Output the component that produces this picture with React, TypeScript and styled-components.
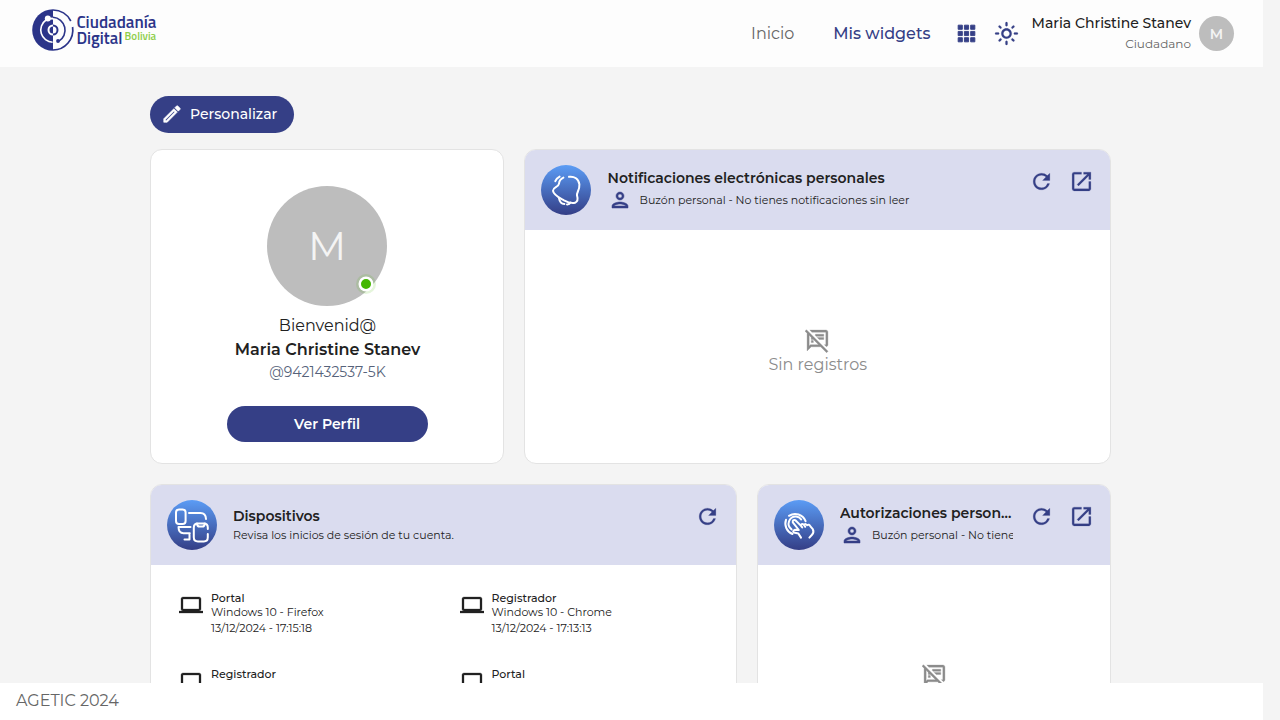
import React, { ReactNode } from "react";
import styled, { createGlobalStyle } from "styled-components";
import {
  MdApps,
  MdOutlineLightMode,
  MdOutlineEdit,
  MdOutlinePerson,
  MdRefresh,
  MdLaunch,
  MdOutlineSpeakerNotesOff,
  MdLaptop,
} from "react-icons/md";

const navy = "#353f86";
const logoNavy = "#2b3489";
const family = `Montserrat, Inter, "Liberation Sans", sans-serif`;

const GlobalStyle = createGlobalStyle`
  * { box-sizing: border-box; }
  body { margin: 0; background: #f4f4f4; font-family: ${family}; overflow: hidden; }
  button { font: inherit; border: 0; padding: 0; background: none; cursor: pointer; }
  svg { display: block; flex: none; }
  svg[stroke-width="0"] path[fill="none"] { stroke: none; }
`;

const Text = styled.span<{ $size: number; $line: number; $weight?: number; $color?: string }>`
  display: block;
  white-space: nowrap;
  font-size: ${(p) => p.$size}px;
  line-height: ${(p) => p.$line}px;
  font-weight: ${(p) => p.$weight ?? 400};
  color: ${(p) => p.$color ?? "#212121"};
`;

const Shell = styled.div`
  width: 1263px;
  height: 720px;
  display: flex;
  flex-direction: column;
`;

const Header = styled.header`
  flex: 0 0 67px;
  display: flex;
  align-items: center;
  justify-content: space-between;
  padding: 0 29px 0 30px;
  background: #fdfdfd;
`;

const Logo = styled.svg`
  margin-bottom: 7px;
`;

const Nav = styled.nav`
  display: flex;
  align-items: center;
  color: ${navy};
`;

const NavLink = styled.a<{ $active?: boolean }>`
  font-size: 16px;
  line-height: 24px;
  font-weight: ${(p) => (p.$active ? 500 : 400)};
  color: ${(p) => (p.$active ? navy : "#666")};
  margin-right: ${(p) => (p.$active ? 23 : 39)}px;
`;

const IconButton = styled.button<{ $bold?: number }>`
  display: flex;
  color: ${navy};
  svg {
    stroke-width: ${(p) => p.$bold ?? 0.2}px;
  }
`;

const NavIcons = styled.div`
  display: flex;
  gap: 15px;
  margin-right: 13px;
  padding-bottom: 1px;
`;

const UserBlock = styled.div`
  display: flex;
  flex-direction: column;
  align-items: flex-end;
  margin-right: 8px;
`;

const Avatar = styled.div<{ $size: number }>`
  position: relative;
  display: flex;
  align-items: center;
  justify-content: center;
  width: ${(p) => p.$size}px;
  height: ${(p) => p.$size}px;
  border-radius: 50%;
  background: #bdbdbd;
`;

const StatusDot = styled.i`
  position: absolute;
  right: 14px;
  bottom: 15px;
  width: 14px;
  height: 14px;
  border-radius: 50%;
  background: #44b700;
  border: 2px solid #fff;
  box-shadow: 0 0 0 0.5px #fff, 0 0 0 3px rgba(68, 183, 0, 0.14);
`;

const Main = styled.main`
  flex: 1;
  min-height: 0;
  overflow: hidden;
  padding: 29px 152px 0 150px;
`;

const PillButton = styled.button<{ $width: number; $height: number; $icon?: boolean }>`
  display: flex;
  align-items: center;
  justify-content: ${(p) => (p.$icon ? "flex-start" : "center")};
  gap: 7px;
  width: ${(p) => p.$width}px;
  height: ${(p) => p.$height}px;
  padding: ${(p) => (p.$icon ? "0 0 1px 11px" : "0")};
  border-radius: 20px;
  background: ${navy};
  color: #fff;
  svg {
    stroke-width: 0.7px;
  }
`;

const Grid = styled.div`
  display: flex;
  flex-wrap: wrap;
  gap: 20px;
  margin-top: 16px;
`;

const Card = styled.section<{ $wide?: boolean }>`
  width: ${(p) => (p.$wide ? 587 : 354)}px;
  height: 315px;
  border: 1px solid #e3e3e3;
  border-radius: 12px;
  background: #fff;
  overflow: hidden;
`;

const ProfileBody = styled.div`
  display: flex;
  flex-direction: column;
  align-items: center;
  padding-top: 36px;
`;

const ProfileText = styled.div`
  display: flex;
  flex-direction: column;
  align-items: center;
  padding: 8px 0 23px 1px;
`;

const CardHeader = styled.div`
  display: flex;
  height: 80px;
  padding: 15px 16px 0;
  background: #dadcef;
`;

const Titles = styled.div<{ $top: number; $left: number }>`
  flex: 1;
  min-width: 0;
  overflow: hidden;
  margin-left: ${(p) => p.$left}px;
  padding-top: ${(p) => p.$top}px;
`;

const Title = styled.h2`
  margin: 0;
  font-size: 14px;
  line-height: 20px;
  font-weight: 600;
  color: #212121;
  white-space: nowrap;
  overflow: hidden;
  text-overflow: ellipsis;
`;

const SubLine = styled.div`
  display: flex;
  align-items: center;
  gap: 8px;
  height: 24px;
  overflow: hidden;
  color: ${navy};
  svg {
    stroke-width: 0.5px;
  }
`;

const Actions = styled.div`
  display: flex;
  gap: 15px;
  margin: 0 0 0 16px;
  padding-top: 4px;
`;

const EmptyState = styled.div`
  display: flex;
  flex-direction: column;
  align-items: center;
  gap: 0.5px;
  padding: 97.5px 0 0 0.5px;
  color: #8c8c8c;
  svg {
    stroke-width: 0.3px;
  }
`;

const DeviceList = styled.div`
  display: grid;
  grid-template-columns: 280.5px 280.5px;
  grid-auto-rows: 76px;
  padding: 26px 0 0 28px;
`;

const Device = styled.div`
  display: flex;
  gap: 8px;
  color: #212121;
`;

const LaptopIcon = styled(MdLaptop)`
  margin-top: 2px;
  stroke-width: 0.3px;
`;

const Footer = styled.footer`
  flex: 0 0 37px;
  display: flex;
  align-items: center;
  padding: 0 0 2px 16px;
  background: #fff;
`;

const BrandLogo = () => (
  <Logo width="130" height="46" viewBox="30 7 130 46">
    <path d="M53 9.2a20.8 20.8 0 0 0 0 41.6z" fill={logoNavy} />
    <path d="M53 10A20 20 0 0 1 70.8 21" fill="none" stroke={logoNavy} strokeWidth="1.7" />
    <path d="M72.6 27A20 20 0 0 1 53 50" fill="none" stroke={logoNavy} strokeWidth="1.7" />
    <path d="M46 20A12.2 12.2 0 0 0 52.6 42.2" fill="none" stroke="#fff" strokeWidth="1.6" />
    <circle cx="47.8" cy="18.6" r="3" fill="#fff" />
    <path d="M48 18.6H53" stroke="#fff" strokeWidth="2" />
    <path d="M53 17.2A13 13 0 0 1 58.6 41.4" fill="none" stroke={logoNavy} strokeWidth="1.6" />
    <circle cx="58" cy="41" r="1.9" fill={logoNavy} />
    <path d="M53 25.5a4.5 4.5 0 1 0 0 9" fill="none" stroke="#fff" strokeWidth="2" />
    <path d="M53 25.5a4.5 4.5 0 0 1 0 9" fill="none" stroke={logoNavy} strokeWidth="2" />
    <g fontFamily="'Titillium Web', Roboto, sans-serif" fill={logoNavy} fontWeight="600">
      <text x="76.4" y="28" fontSize="17" textLength="80" lengthAdjust="spacingAndGlyphs">Ciudadanía</text>
      <text x="76.4" y="43.8" fontSize="17" textLength="46" lengthAdjust="spacingAndGlyphs">Digital</text>
      <text x="124.6" y="40" fontSize="11.2" fill="#8fce4a" textLength="31.6" lengthAdjust="spacingAndGlyphs">Bolivia</text>
    </g>
  </Logo>
);

const Badge = ({ id, children }: { id: string; children: ReactNode }) => (
  <svg width="50" height="50" viewBox="0 0 50 50" fill="none" stroke="#fff" strokeWidth="2" strokeLinecap="round" strokeLinejoin="round">
    <defs>
      <linearGradient id={id} x1="0" y1="0" x2="0" y2="1">
        <stop offset="0" stopColor="#5b9cf5" />
        <stop offset="1" stopColor="#343e86" />
      </linearGradient>
    </defs>
    <circle cx="25" cy="25" r="25" fill={`url(#${id})`} stroke="none" />
    {children}
  </svg>
);

const BellBadge = () => (
  <Badge id="bell">
    <path d="M14.3 16.2Q15.5 13.2 18.6 11.6M22.4 12.6Q18.4 14.4 18 18.6C17.5 22.5 12 22 12 25.8C12.6 30 18 32.5 23 35.4C27 37.6 31 38.6 34 37.8C37.4 36.4 36.8 33 36 30.4C35.4 27.6 38.8 25 38.4 19.4C37.8 14 33.4 11 28 11.8" />
    <path d="M18 33.4C18.6 36.6 20.4 38.8 23.4 39M26 39.4Q28.4 39.6 29.6 37.6" />
  </Badge>
);

const DevicesBadge = () => (
  <Badge id="devices">
    <rect x="9" y="9.5" width="9.6" height="14.6" rx="3" />
    <path d="M22 13H33.5C37.5 13 38.8 15 39 19" />
    <path d="M23.5 27H11.5C11.5 31.5 13 33.2 16.5 33.2H22.8M17.5 39.6H22.5V33.2" />
    <path d="M40.8 29V27.5Q40.8 23.4 36.8 23.4H31Q26.8 23.4 26.8 27.5V37.2Q26.8 41.4 31 41.4H36.8Q40.8 41.4 40.8 37.2V34" />
    <path d="M30 23.6Q30.3 26.6 32.4 26.6H35.4Q37.4 26.6 37.8 23.6" />
  </Badge>
);

const TouchBadge = () => (
  <Badge id="touch">
    <path d="M18.5 34A11.2 11.2 0 0 1 12 19.8M15 15.8A11.2 11.2 0 0 1 31.6 21.2" />
    <path d="M17.6 29.4A7.2 7.2 0 0 1 22 16.4Q25.6 16.8 27.2 19.4" />
    <path d="M27 37.6L24.4 33.6L19.8 32.6Q18.2 31 20.8 29.8L24.8 30L18.8 22.4Q18.4 19.4 21.4 20.2L26.8 25.6Q27.6 22.8 30 25Q31 23 33 25.2Q35 23.8 36.4 26.4L38.8 29.2Q40.4 32.4 38 34.8L35.4 37.6M26.8 25.6L28.2 27.4M30 25L31.2 26.8" />
  </Badge>
);

const Empty = () => (
  <EmptyState>
    <MdOutlineSpeakerNotesOff size={25} />
    <Text $size={16} $line={24} $color="#8c8c8c">Sin registros</Text>
  </EmptyState>
);

type WidgetProps = {
  title: string;
  subtitle: string;
  badge: ReactNode;
  wide?: boolean;
  mailbox?: boolean;
  children: ReactNode;
};

const Widget = ({ title, subtitle, badge, wide, mailbox, children }: WidgetProps) => (
  <Card $wide={wide}>
    <CardHeader>
      {badge}
      <Titles $top={mailbox ? 3 : 6} $left={mailbox && wide ? 16.6 : 16}>
        <Title>{title}</Title>
        {mailbox ? (
          <SubLine>
            <MdOutlinePerson size={24} />
            <Text $size={11} $line={16}>{subtitle}</Text>
          </SubLine>
        ) : (
          <Text $size={11} $line={18}>{subtitle}</Text>
        )}
      </Titles>
      <Actions>
        <IconButton aria-label="Actualizar"><MdRefresh size={25} /></IconButton>
        {mailbox && <IconButton aria-label="Abrir"><MdLaunch size={25} /></IconButton>}
      </Actions>
    </CardHeader>
    {children}
  </Card>
);

const devices = [
  { app: "Portal", system: "Windows 10 - Firefox", date: "13/12/2024 - 17:15:18" },
  { app: "Registrador", system: "Windows 10 - Chrome", date: "13/12/2024 - 17:13:13" },
  { app: "Registrador" },
  { app: "Portal" },
];

export default function App() {
  return (
    <>
      <GlobalStyle />
      <Shell>
        <Header>
          <BrandLogo />
          <Nav>
            <NavLink>Inicio</NavLink>
            <NavLink $active>Mis widgets</NavLink>
            <NavIcons>
              <IconButton aria-label="Aplicaciones" $bold={0.9}><MdApps size={25} /></IconButton>
              <IconButton aria-label="Tema"><MdOutlineLightMode size={25} /></IconButton>
            </NavIcons>
            <UserBlock>
              <Text $size={14} $line={21} $weight={500}>Maria Christine Stanev</Text>
              <Text $size={12} $line={20} $color="#666">Ciudadano</Text>
            </UserBlock>
            <Avatar $size={35}>
              <Text $size={14} $line={20} $weight={600} $color="#f4f4f4">M</Text>
            </Avatar>
          </Nav>
        </Header>
        <Main>
          <PillButton $width={144} $height={37} $icon>
            <MdOutlineEdit size={22} />
            <Text $size={14} $line={20} $weight={500} $color="#fff">Personalizar</Text>
          </PillButton>
          <Grid>
            <Card>
              <ProfileBody>
                <Avatar $size={120}>
                  <Text $size={40} $line={50} $color="#f4f4f4">M</Text>
                  <StatusDot />
                </Avatar>
                <ProfileText>
                  <Text $size={16} $line={24}>Bienvenid@</Text>
                  <Text $size={16} $line={24} $weight={600}>Maria Christine Stanev</Text>
                  <Text $size={14} $line={21} $color="#56627a">@9421432537-5K</Text>
                </ProfileText>
                <PillButton $width={201} $height={36}>
                  <Text $size={14} $line={20} $weight={600} $color="#fff">Ver Perfil</Text>
                </PillButton>
              </ProfileBody>
            </Card>
            <Widget wide mailbox badge={<BellBadge />} title="Notificaciones electrónicas personales" subtitle="Buzón personal - No tienes notificaciones sin leer">
              <Empty />
            </Widget>
            <Widget wide badge={<DevicesBadge />} title="Dispositivos" subtitle="Revisa los inicios de sesión de tu cuenta.">
              <DeviceList>
                {devices.map((d, i) => (
                  <Device key={i}>
                    <LaptopIcon size={24} />
                    <div>
                      <Text $size={11} $line={14} $weight={500}>{d.app}</Text>
                      {d.system && <Text $size={11} $line={14}>{d.system}</Text>}
                      {d.date && <Text $size={11} $line={18}>{d.date}</Text>}
                    </div>
                  </Device>
                ))}
              </DeviceList>
            </Widget>
            <Widget mailbox badge={<TouchBadge />} title="Autorizaciones personales" subtitle="Buzón personal - No tienes autorizaciones">
              <Empty />
            </Widget>
          </Grid>
        </Main>
        <Footer>
          <Text $size={16} $line={24} $color="#666">AGETIC 2024</Text>
        </Footer>
      </Shell>
    </>
  );
}
